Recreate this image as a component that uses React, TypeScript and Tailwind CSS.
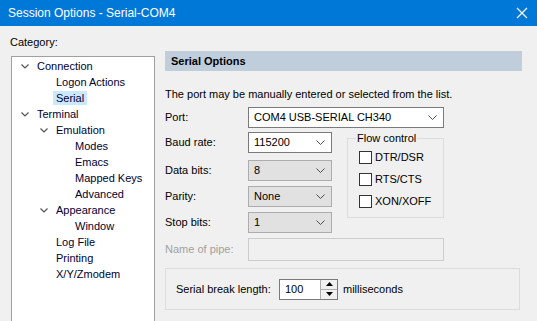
import React from "react";

const font = { fontFamily: '"Liberation Sans", Arial, sans-serif' };

function Chevron() {
  return (
    <svg width="9" height="6" viewBox="0 0 9 6">
      <path d="M0.5 0.5 L4.5 4.5 L8.5 0.5" fill="none" stroke="#4d4d4d" strokeWidth="1" />
    </svg>
  );
}

function TreeChevron() {
  return (
    <svg width="8" height="5" viewBox="0 0 8 5">
      <path d="M0.5 0.5 L4 4 L7.5 0.5" fill="none" stroke="#555" strokeWidth="1.2" />
    </svg>
  );
}

function TreeItem({ label, level, chevron, selected }: { label: string; level: number; chevron?: boolean; selected?: boolean }) {
  const pad = level === 0 ? "pl-[9px]" : level === 1 ? "pl-[28px]" : "pl-[47px]";
  return (
    <div className={`flex h-[16px] items-center ${pad}`}>
      <div className="flex w-[13px] items-center">{chevron ? <TreeChevron /> : null}</div>
      <span className={`px-[3px] leading-[14px] ${selected ? "bg-[#cce8ff]" : ""}`}>{label}</span>
    </div>
  );
}

function Combo({ value, white, width }: { value: string; white?: boolean; width: string }) {
  return (
    <div
      className={`flex h-[21px] ${width} items-center justify-between border pl-[5px] pr-[6px] ${
        white ? "border-[#7a7a7a] bg-white" : "border-[#adadad] bg-[#e1e1e1]"
      }`}
    >
      <span>{value}</span>
      <Chevron />
    </div>
  );
}

function Check({ label }: { label: string }) {
  return (
    <div className="flex h-[13px] items-center gap-[3px] leading-[13px]">
      <div className="h-[13px] w-[13px] border border-[#333] bg-white" />
      <span>{label}</span>
    </div>
  );
}

export default function App() {
  return (
    <div className="h-[321px] w-[537px] overflow-hidden bg-[#f0f0f0] text-[11px] text-black" style={font}>
      <div className="flex h-[26px] items-center justify-between bg-[#0078d7] pl-[8px] pr-[9px] text-[12px] text-white">
        <span>Session Options - Serial-COM4</span>
        <svg width="12" height="12" viewBox="0 0 12 12">
          <path d="M1 1 L11 11 M11 1 L1 11" stroke="white" strokeWidth="1.2" />
        </svg>
      </div>
      <div className="flex">
        <div className="flex w-[155px] flex-col pl-[10px] pt-[8px]">
          <div className="h-[16px] leading-[16px]">Category:</div>
          <div className="ml-[1px] mt-[6px] h-[300px] border border-[#a0a0a0] bg-white pt-[1px] text-[#000030]">
            <TreeItem label="Connection" level={0} chevron />
            <TreeItem label="Logon Actions" level={1} />
            <TreeItem label="Serial" level={1} selected />
            <TreeItem label="Terminal" level={0} chevron />
            <TreeItem label="Emulation" level={1} chevron />
            <TreeItem label="Modes" level={2} />
            <TreeItem label="Emacs" level={2} />
            <TreeItem label="Mapped Keys" level={2} />
            <TreeItem label="Advanced" level={2} />
            <TreeItem label="Appearance" level={1} chevron />
            <TreeItem label="Window" level={2} />
            <TreeItem label="Log File" level={1} />
            <TreeItem label="Printing" level={1} />
            <TreeItem label="X/Y/Zmodem" level={1} />
          </div>
        </div>
        <div className="ml-[10px] flex w-[357px] flex-col pt-[25px]">
          <div className="flex h-[20px] items-center bg-[#c0cedb] pl-[6px] font-bold">Serial Options</div>
          <div className="mt-[15px] h-[16px] leading-[16px]">The port may be manually entered or selected from the list.</div>
          <div className="mt-[5px] flex h-[21px] items-center">
            <span className="w-[83px]">Port:</span>
            <Combo value="COM4 USB-SERIAL CH340" white width="w-[196px]" />
          </div>
          <div className="mt-[4px] flex">
            <div className="flex flex-col gap-[5px]">
              <div className="flex h-[21px] items-center">
                <span className="w-[83px]">Baud rate:</span>
                <Combo value="115200" white width="w-[84px]" />
              </div>
              <div className="mt-[2px] flex h-[21px] items-center">
                <span className="w-[83px]">Data bits:</span>
                <Combo value="8" width="w-[84px]" />
              </div>
              <div className="flex h-[21px] items-center">
                <span className="w-[83px]">Parity:</span>
                <Combo value="None" width="w-[84px]" />
              </div>
              <div className="flex h-[21px] items-center">
                <span className="w-[83px]">Stop bits:</span>
                <Combo value="1" width="w-[84px]" />
              </div>
            </div>
            <div className="relative ml-[15px] mt-[6px] h-[80px] w-[97px] border border-[#dcdcdc]">
              <span className="absolute left-[8px] top-[-8px] bg-[#f0f0f0] px-[1px] leading-[14px]">Flow control</span>
              <div className="ml-[11px] mt-[12px] flex flex-col gap-[9px]">
                <Check label="DTR/DSR" />
                <Check label="RTS/CTS" />
                <Check label="XON/XOFF" />
              </div>
            </div>
          </div>
          <div className="mt-[5px] flex h-[23px] items-center">
            <span className="w-[83px] text-[#a0a0a0]">Name of pipe:</span>
            <div className="h-[23px] w-[196px] border border-[#cccccc]" />
          </div>
          <div className="mt-[7px] flex h-[42px] w-[355px] items-center border border-[#dcdcdc] pl-[10px]">
            <span className="w-[103px] whitespace-nowrap">Serial break length:</span>
            <div className="flex h-[21px] w-[59px] border border-[#7a7a7a] bg-white">
              <span className="flex-1 pl-[5px] leading-[19px]">100</span>
              <div className="flex w-[17px] flex-col border-l border-[#adadad] bg-[#f0f0f0]">
                <div className="flex flex-1 items-center justify-center border-b border-[#adadad]">
                  <svg width="7" height="4" viewBox="0 0 7 4"><path d="M0 4 L3.5 0 L7 4 Z" fill="#000" /></svg>
                </div>
                <div className="flex flex-1 items-center justify-center">
                  <svg width="7" height="4" viewBox="0 0 7 4"><path d="M0 0 L3.5 4 L7 0 Z" fill="#000" /></svg>
                </div>
              </div>
            </div>
            <span className="ml-[5px]">milliseconds</span>
          </div>
        </div>
      </div>
    </div>
  );
}
